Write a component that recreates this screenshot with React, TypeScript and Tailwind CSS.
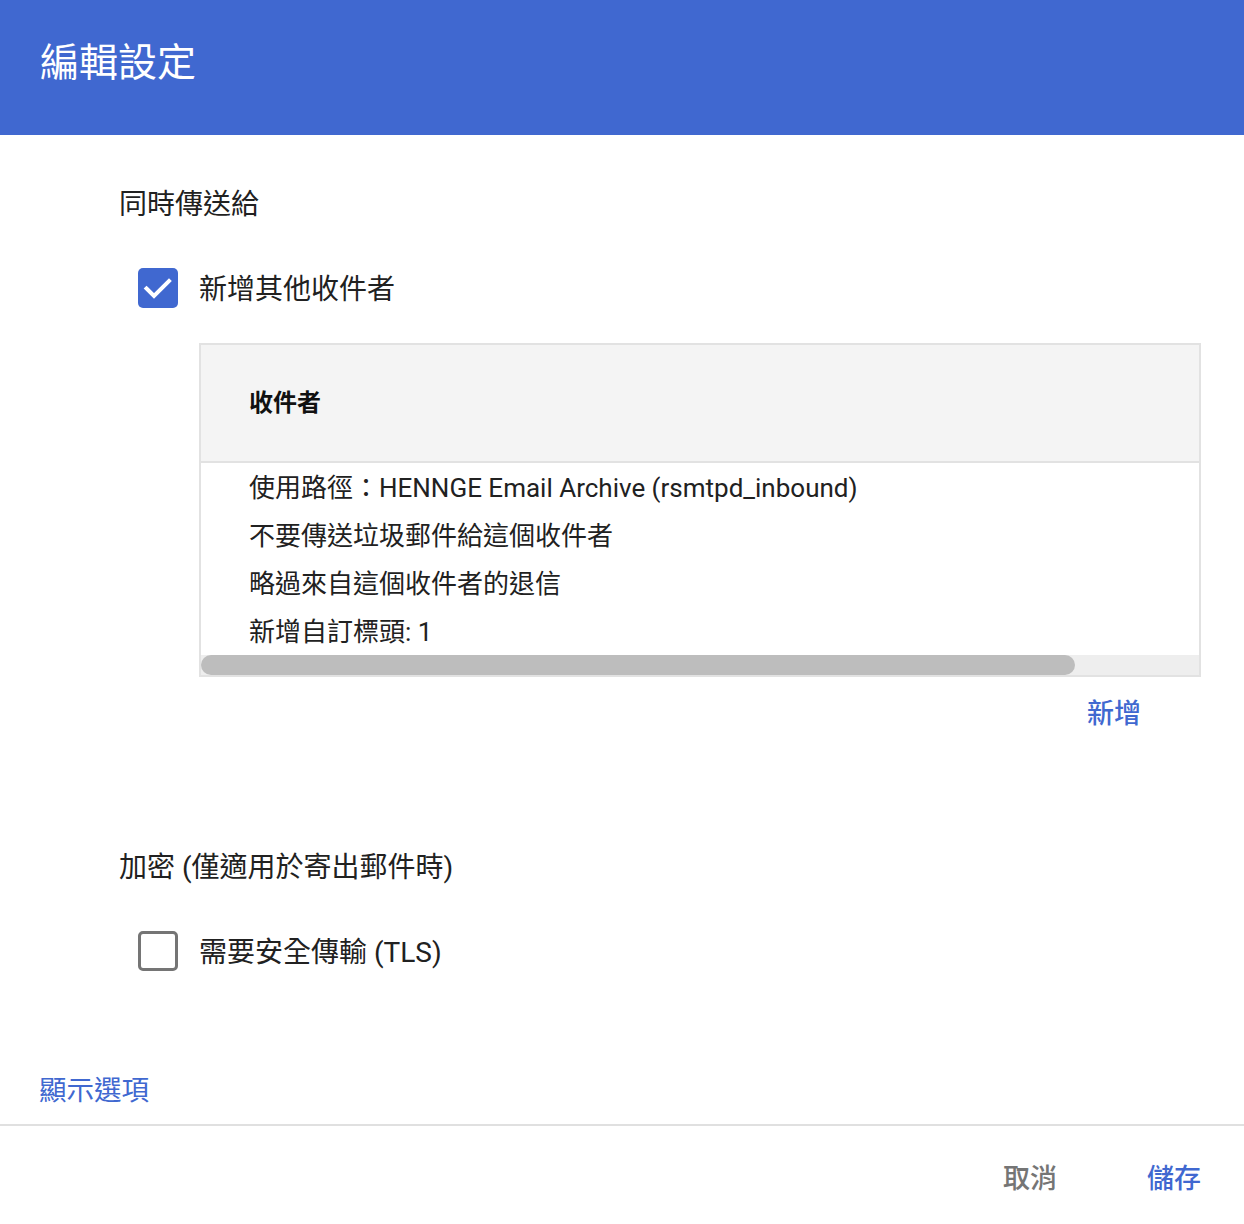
import React from 'react';

const font = { fontFamily: 'Roboto, "Noto Sans CJK TC", sans-serif' };

const rows = [
  '使用路徑：HENNGE Email Archive (rsmtpd_inbound)',
  '不要傳送垃圾郵件給這個收件者',
  '略過來自這個收件者的退信',
  '新增自訂標頭: 1',
];

const App: React.FC = () => {
  return (
    <div className="w-[1244px] h-[1224px] bg-white text-[#212121] overflow-hidden" style={font}>
      {/* Header */}
      <div className="h-[135px] bg-[#4068d0] pl-[40px] pt-[43px]">
        <h1 className="text-[39px] leading-[40px] text-white font-normal">編輯設定</h1>
      </div>

      <div className="pl-[119px] pr-[43px]">
        <div className="mt-[48px] pt-[4px] text-[28px] leading-[36px]">同時傳送給</div>

        <label className="mt-[45px] ml-[19px] flex items-center gap-[21px]">
          <span className="w-[40px] h-[40px] rounded-[5px] bg-[#4068d0] flex items-center justify-center">
            <svg width="40" height="40" viewBox="0 0 40 40" fill="none">
              <path d="M8.5 20.5l7.5 7.5L31 13" stroke="white" strokeWidth="4" strokeLinecap="square" />
            </svg>
          </span>
          <span className="pt-[4px] text-[28px] leading-[36px]">新增其他收件者</span>
        </label>

        {/* Recipients table */}
        <div className="mt-[35px] ml-[80px] border-2 border-[#e2e2e2]">
          <div className="h-[118px] bg-[#f4f4f4] border-b-2 border-[#e2e2e2] flex items-center pl-[48px]">
            <span className="text-[24px] font-bold text-[#111]">收件者</span>
          </div>
          <div className="pl-[48px]">
            {rows.map((r) => (
              <div key={r} className="pt-[3px] text-[26px] leading-[45px] whitespace-nowrap">
                {r}
              </div>
            ))}
          </div>
          <div className="h-[20px] bg-[#eeeeee]">
            <div className="h-full w-[874px] rounded-full bg-[#bdbdbd]" />
          </div>
        </div>

        <div className="mt-[15px] flex justify-end pr-[60px]">
          <span className="pt-[4px] text-[27px] leading-[36px] font-medium text-[#4068d0]">新增</span>
        </div>

        <div className="mt-[114px] pt-[4px] text-[28px] leading-[36px]">加密 (僅適用於寄出郵件時)</div>

        <label className="mt-[45px] ml-[19px] flex items-center gap-[21px]">
          <span className="w-[40px] h-[40px] rounded-[5px] border-[3px] border-[#757575] bg-white" />
          <span className="pt-[4px] text-[28px] leading-[36px]">需要安全傳輸 (TLS)</span>
        </label>
      </div>

      <div className="mt-[98px] pl-[39px] pt-[4px] text-[27.5px] leading-[36px] text-[#4068d0]">顯示選項</div>

      <div className="mt-[15px] h-[2px] bg-[#e0e0e0]" />

      <div className="mt-[31px] pr-[43px] flex justify-end gap-[90px]">
        <span className="pt-[4px] text-[27px] leading-[36px] font-medium text-[#757575]">取消</span>
        <span className="pt-[4px] text-[27px] leading-[36px] font-medium text-[#4068d0]">儲存</span>
      </div>
    </div>
  );
};

export default App;
